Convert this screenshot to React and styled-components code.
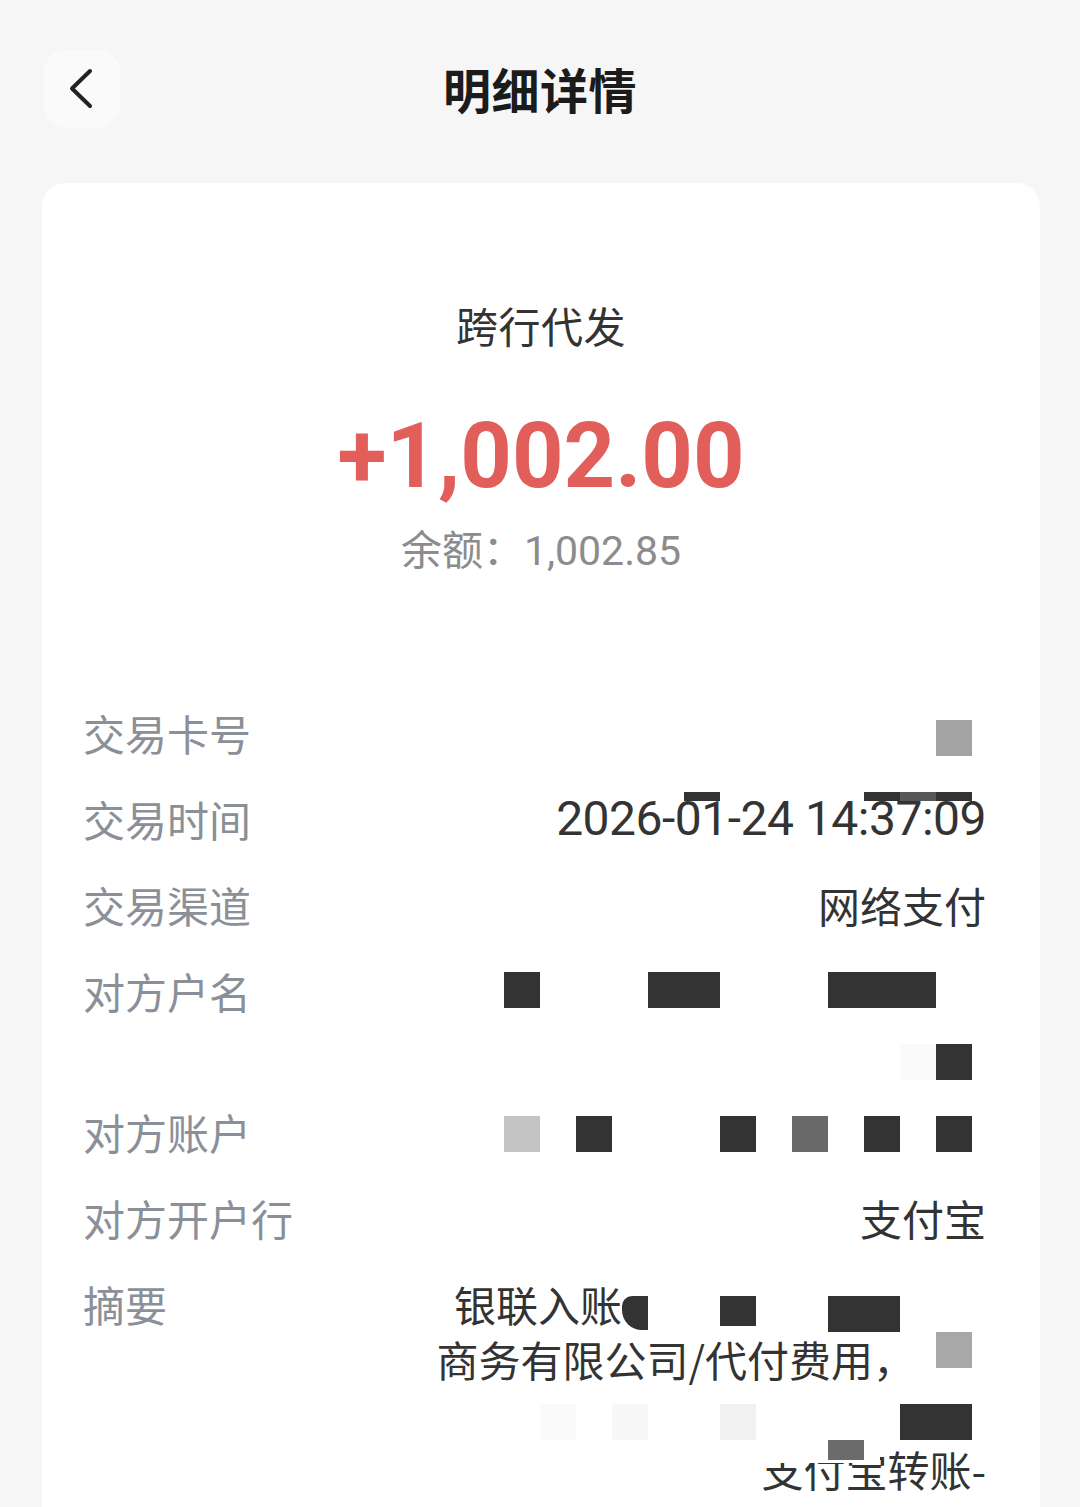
import styled, { createGlobalStyle, css } from 'styled-components'

// right edge of every value column, in page pixels
const VALUE_END = 986

const GlobalStyle = createGlobalStyle`
  html, body {
    margin: 0;
    padding: 0;
    background: #f6f6f6;
  }
  body {
    font-family: "Noto Sans CJK SC", "Noto Sans", sans-serif;
    overflow: hidden;
  }
`

const Page = styled.div`
  width: 1080px;
  height: 1507px;
  overflow: hidden;
`

const Header = styled.header`
  display: grid;
  grid-template-columns: 1fr auto 1fr;
  align-items: center;
  height: 176px;
  padding: 0 44px;
  box-sizing: border-box;
`

const BackButton = styled.button`
  justify-self: start;
  display: flex;
  align-items: center;
  justify-content: center;
  width: 76px;
  height: 78px;
  margin-top: 2px;
  padding: 0;
  border: none;
  border-radius: 22px;
  background: #fafafa;
`

const Title = styled.h1`
  margin: 0;
  font-size: 48px;
  font-weight: 700;
  letter-spacing: 0.5px;
  color: #1b1b1b;
`

const Card = styled.main`
  margin: 7px 40px 0 42px;
  padding-top: 112px;
  background: #fff;
  border-radius: 24px 24px 0 0;
  height: 1324px;
  box-sizing: border-box;
`

const Summary = styled.section`
  text-align: center;
`

const TypeName = styled.div`
  font-size: 42px;
  line-height: 60px;
  color: #333;
  letter-spacing: 0.5px;
`

const Amount = styled.div`
  margin-top: 52px;
  font-family: Roboto, "Noto Sans", sans-serif;
  font-weight: 700;
  font-size: 90px;
  line-height: 100px;
  color: #e25e5a;
`

const Balance = styled.div`
  margin-top: 16px;
  font-family: Roboto, "Noto Sans CJK SC", sans-serif;
  font-size: 41px;
  line-height: 56px;
  color: #8c8c8c;
`

const Details = styled.dl`
  display: grid;
  grid-template-columns: auto 1fr;
  row-gap: 31px;
  margin: 126px 0 0;
  padding: 0 54px 0 41px;
`

const Label = styled.dt`
  margin: 0;
  font-size: 42px;
  line-height: 55px;
  color: #8a8f98;
`

const Value = styled.dd`
  display: flex;
  flex-direction: column;
  margin: 0;
  font-size: 42px;
  color: #333;
`

const Line = styled.div`
  position: relative;
  display: flex;
  justify-content: flex-end;
  align-items: flex-start;
  height: 55px;
  line-height: 55px;
  white-space: nowrap;
`

const Text = styled.span`
  flex: none;
  ${p => p.$num && css`
    font-family: Roboto, "Noto Sans", sans-serif;
    font-size: 48px;
    letter-spacing: -0.5px;
  `}
`

// one mosaic tile of the redacted parts
const Blot = styled.span`
  display: block;
  flex: none;
  width: ${p => p.$w}px;
  height: ${p => p.$h}px;
  margin-top: ${p => p.$t}px;
  margin-left: ${p => p.$ml}px;
  background: ${p => p.$c};
  border-radius: ${p => p.$r || 0};
`

const Tail = styled.span`
  flex: none;
  width: ${p => p.$w}px;
`

// tiles lying on top of text
const Patch = styled.span`
  position: absolute;
  top: ${p => p.$t}px;
  right: ${p => p.$right}px;
  width: ${p => p.$w}px;
  height: ${p => p.$h}px;
  background: ${p => p.$c};
`

const Chevron = () => (
  <svg width="30" height="44" viewBox="0 0 30 44" fill="none">
    <path d="M23 4 L5 21.5 L23 39" stroke="#222" strokeWidth="4" strokeLinecap="round" strokeLinejoin="round" />
  </svg>
)

// cells: [x, width, colour, top, height?, radius?] in page x coordinates
const tiles = (cells, from) => {
  let prev = from ?? cells[0][0]
  const out = cells.map(([x, w, c, t, h = 36, r]) => {
    const el = <Blot key={x} $w={w} $h={h} $c={c} $t={t} $ml={x - prev} $r={r} />
    prev = x + w
    return el
  })
  out.push(<Tail key="tail" $w={VALUE_END - prev} />)
  return out
}

const patches = cells =>
  cells.map(([x, w, c, t, h]) => (
    <Patch key={x + c} $right={VALUE_END - x - w} $w={w} $c={c} $t={t} $h={h} />
  ))

const App = () => {
  return (
    <Page>
      <GlobalStyle />
      <Header>
        <BackButton aria-label="返回">
          <Chevron />
        </BackButton>
        <Title>明细详情</Title>
        <span />
      </Header>

      <Card>
        <Summary>
          <TypeName>跨行代发</TypeName>
          <Amount>+1,002.00</Amount>
          <Balance>余额：1,002.85</Balance>
        </Summary>

        <Details>
          <Label>交易卡号</Label>
          <Value>
            <Line>{tiles([[936, 36, '#a3a3a3', 15]])}</Line>
          </Value>

          <Label>交易时间</Label>
          <Value>
            <Line>
              <Text $num>2026-01-24 14:37:09</Text>
              {patches([
                [684, 36, '#333', 1, 9],
                [864, 36, '#333', 1, 9],
                [900, 36, '#585858', 1, 9],
                [936, 36, '#333', 1, 9],
              ])}
            </Line>
          </Value>

          <Label>交易渠道</Label>
          <Value>
            <Line><Text>网络支付</Text></Line>
          </Value>

          <Label>对方户名</Label>
          <Value>
            <Line>
              {tiles([
                [504, 36, '#333', 9],
                [648, 72, '#333', 9],
                [828, 108, '#333', 9],
              ])}
            </Line>
            <Line>
              {tiles([
                [900, 36, '#fafafa', 26],
                [936, 36, '#333', 26],
              ])}
            </Line>
          </Value>

          <Label>对方账户</Label>
          <Value>
            <Line>
              {tiles([
                [504, 36, '#c4c4c4', 12],
                [576, 36, '#333', 12],
                [720, 36, '#333', 12],
                [792, 36, '#6a6a6a', 12],
                [864, 36, '#333', 12],
                [936, 36, '#333', 12],
              ])}
            </Line>
          </Value>

          <Label>对方开户行</Label>
          <Value>
            <Line><Text>支付宝</Text></Line>
          </Value>

          <Label>摘要</Label>
          <Value>
            <Line>
              <Text>银联入账</Text>
              {tiles([
                [622, 26, '#333', 20, 34, '10px 0 0 20px'],
                [720, 36, '#333', 20, 30],
                [828, 72, '#333', 20],
              ], 622)}
            </Line>
            <Line>
              <Text>商务有限公司/代付费用，</Text>
              {tiles([[936, 36, '#a8a8a8', 1]], 915)}
            </Line>
            <Line>
              {tiles([
                [540, 36, '#fafafa', 18],
                [612, 36, '#f7f7f7', 18],
                [720, 36, '#f1f1f1', 18],
                [900, 72, '#333', 18],
              ])}
            </Line>
            <Line>
              <Text>支付宝转账-</Text>
              {patches([
                [740, 140, '#fff', -1, 23],
                [828, 36, '#6b6b6b', -1, 20],
              ])}
            </Line>
          </Value>
        </Details>
      </Card>
    </Page>
  )
}

export default App
